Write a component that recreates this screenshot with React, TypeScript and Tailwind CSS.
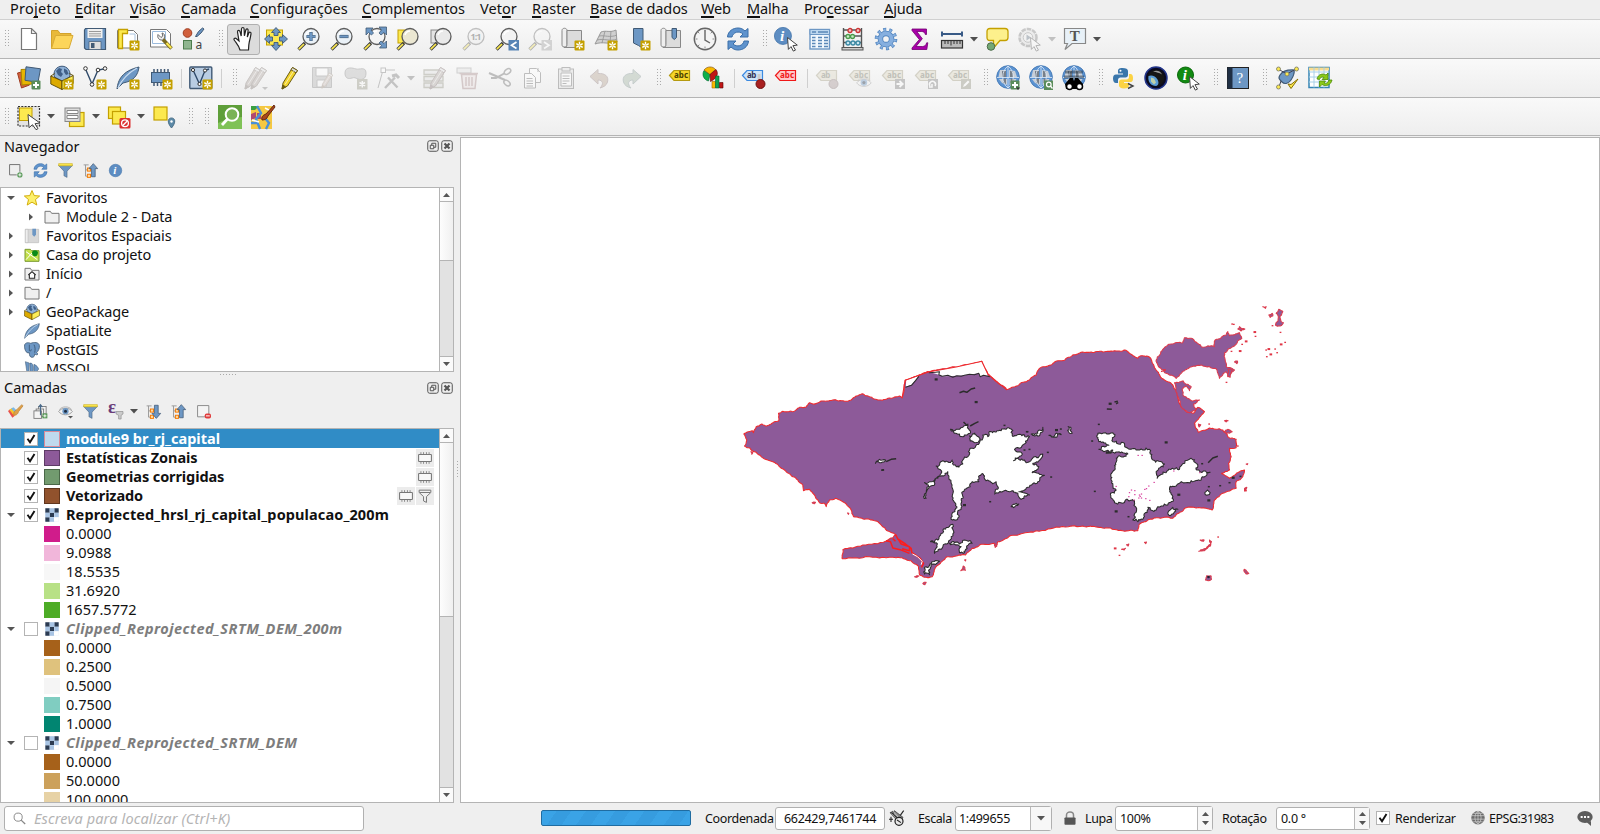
import React from 'react';

/* ---------- icons (24 x 24 grid) ---------- */
const Y = '#fce94f';
const B = '#6d97c4';
const D = '#415a75';

const star = (
  <g>
    <rect x="13.5" y="13.5" width="10" height="10" rx="1" fill="#c4a000" />
    <path d="M18.5 14.8v7.4M15.3 16.6l6.4 3.8M21.7 16.6l-6.4 3.8" stroke="#fff" strokeWidth="1.4" />
    <circle cx="18.5" cy="18.5" r="1.2" fill="#e6d27a" />
  </g>
);
const plus = (
  <g>
    <rect x="14.5" y="14.5" width="9" height="9" rx="1" fill="#5a8c5a" />
    <path d="M19 16v6M16 19h6" stroke="#fff" strokeWidth="2" />
  </g>
);
const lens = (c: string) => (
  <g>
    <path d="M1.5 22.5L8 16" stroke="#3a3a3a" strokeWidth="3.2" />
    <path d="M1.8 22.2L7 17" stroke={Y} strokeWidth="1.7" />
    <circle cx="14" cy="9.5" r="8" fill={c} stroke="#5c5c5c" strokeWidth="1.3" />
    <path d="M9 8a5.5 5.5 0 0 1 5-4" stroke="#fff" strokeWidth="1.4" fill="none" />
  </g>
);
const cursor = <path d="M12.5 10.5l9.8 7.6-4.4.6 2.6 4.4-2.2 1-2.3-4.5-2.6 2.8z" fill="#fff" stroke="#444" strokeWidth="1" />;
const globe = (
  <g>
    <circle cx="12" cy="11" r="11.300" fill="#5b93d2" stroke="#4a7db8" strokeWidth="1" />
    <path d="M4 4h6v7H2.500zM13 4l6 1 2 6h-8zM3 13h8v6l-5-2zM13.500 13h7l-3 5-4 1z" fill="#c8cfd8" />
    <path d="M6 5h4v6H6zM14 5h3v6h-3zM7 12.500h3V18L7 17zM14.500 12.500h3v4.500h-3z" fill="#5d6570" opacity=".75" />
    <path d="M12 0v22M1 11.500h22M12 0c-7 5-7 17 0 22M12 0c7 5 7 17 0 22" stroke="#e3eefa" strokeWidth=".8" fill="none" />
  </g>
);
const tag = (fill: string, stroke: string, text: string, label: string) => (
  <g>
    <path d="M1.500 9.500L6 4.500h15.500v10H6z" fill={fill} stroke={stroke} strokeWidth="1.2" />
    <text x="6" y="12.200" fontSize="8" fontWeight="700" fill={text} fontFamily="Noto Sans, sans-serif" textLength={label.length * 4.7}>{label}</text>
  </g>
);
const box = (
  <g>
    <path d="M4.500 11a8 8 0 1 1 15 0L12 15z" fill="#8fb1d6" stroke="#3a5678" />
    <path d="M6 5l3-3 3 1-1 3 2 2-2 3-3-2-1-2zM14 2.500l3 1.500 1.500 4-2.500 1-2-3z" fill="#3f5f88" />
    <path d="M.8 10l11.200 5v8.500L.8 18z" fill="#dcaa00" stroke="#5a4700" strokeWidth=".9" />
    <path d="M23.200 9.500L12 15v8.500l11.200-6z" fill="#fdee58" stroke="#5a4700" strokeWidth=".9" />
    <path d="M.8 10l4-2.500M23.200 9.500l-4-2" stroke="#5a4700" strokeWidth=".9" />
  </g>
);
const feather = <g><path d="M1 23c1-9 5-18 22-22-1 8-5 14-16 16L1 23z" fill={B} stroke={D} strokeWidth="1" /><path d="M2 22C6 13 12 7 21 2" stroke="#c9dcf0" strokeWidth="1.200" fill="none" /></g>;
const refresh = (
  <g stroke="#3a6ea8" strokeWidth="1" fill="#5f93cd">
    <path d="M1.500 10C2 4 7 1 12 1c3 0 5 1 7 3l3-2.500V10h-8l3-3c-4-3.500-10-2-11 3z" />
    <path d="M22.500 14c-.5 6-5.500 9-10.500 9-3 0-5-1-7-3l-3 2.500V14h8l-3 3c4 3.500 10 2 11-3z" />
  </g>
);
const chip = (c: string, s: string) => <g stroke={s} strokeWidth="1"><path d="M5 3v17M8.500 3v17M12 3v17M15.500 3v17M19 3v17" strokeWidth="1.500" /><rect x="2.500" y="6.500" width="18" height="10" fill={c} /></g>;
const pencil = (c: string, s: string) => <g stroke={s} strokeWidth="1"><path d="M5 17L14.500 1.500l5 3L9.500 20 4 23z" fill={c} /><path d="M14.500 1.500l5 3-1.500 2.300-5-3z" fill="#ddd" /><path d="M7 18.500L15.500 5" stroke="#fff" opacity=".6" /><path d="M4 23l1-4 2.500 2z" fill={s} /></g>;
const filter = <g><path d="M1 4h22l-8.500 9v10l-5-2.500V13z" fill={B} stroke={D} strokeWidth=".8" /><path d="M1 1h22v3.500H1z" fill={Y} stroke="#c4a000" strokeWidth=".8" /></g>;
const tree = (up: boolean) => (
  <g>
    <path d="M1 3h8M4 3v18h6M4 11h5" stroke="#999" strokeWidth="1.500" fill="none" />
    <rect x="7" y="8" width="5" height="5" fill="#ffd9a0" stroke="#f57900" strokeWidth="1.500" />
    <rect x="7" y="18" width="5" height="5" fill="#ffd9a0" stroke="#f57900" strokeWidth="1.500" />
    <path d={up ? 'M16.500 1l7 8h-4v13h-6V9h-4z' : 'M16.500 23l7-8h-4V2h-6v13h-4z'} fill={B} stroke={D} strokeWidth="1.200" />
  </g>
);
const folder = <path d="M1.500 3.500h8l2 3h11v14.500h-21z" fill="#f0f0f0" stroke="#777" strokeWidth="1.500" />;
const scroll = <g><path d="M1 3.500c0-3 5-3 5 0V20H3c-2 0-2-2-2-3z" fill="#eee" stroke="#888" /><path d="M6 3.500h14.500V20.500H3c2 0 3-1 3-3z" fill="#dcdcdc" stroke="#888" /></g>;
const eye = <g><path d="M1 12c5-7 17-7 22 0-5 7-17 7-22 0z" fill="#f2f2f2" stroke="#888" strokeWidth="1.200" /><circle cx="12" cy="11.500" r="5" fill={B} /><circle cx="12" cy="11.500" r="2.400" fill="#1d2c40" /><path d="M2 9C7 3 17 3 22 9" stroke="#999" fill="none" /></g>;
const info = <g><circle cx="10.500" cy="10.500" r="10" fill="#5d8dc2" stroke="#4777ac" /><text x="7" y="16.500" fontFamily="Liberation Serif, serif" fontStyle="italic" fontWeight="700" fontSize="18" fill="#fff">i</text></g>;

const ICONS: Record<string, React.ReactNode> = {
  new: <path d="M4.500 1.500h10l5 5v16h-15zM14.500 1.500v5h5" fill="#fff" stroke="#777" strokeWidth="1.200" />,
  open: <g><path d="M1.500 21.500V3.500H8l2 3h11v4" fill="#e8b93a" stroke="#d3a32c" /><path d="M1.500 21.500l4-13h17.500l-4 13z" fill="#fcd55a" stroke="#d9ab35" /></g>,
  save: <g><path d="M1.500 3l1-1.500h20V22.500H3l-1.500-1.500z" fill={B} stroke={D} strokeWidth="1.200" /><path d="M4.500 2h15v9h-15z" fill="#f0f0f0" /><path d="M6 4.500h12M6 6.800h12M6 9h12" stroke="#999" /><path d="M6 14.500h12v8H6z" fill="#dedede" stroke={D} strokeWidth=".7" /><path d="M8 16h3.500v5H8z" fill={D} /></g>,
  layout: <g><path d="M1.500 3.500h16l4 4v13.500h-20z" fill="#fff" stroke="#777" /><path d="M2.500 2.500h9v4h-5v15h-4z" fill={Y} stroke="#c4a000" strokeWidth="1.300" /><path d="M13.500 7h5.500v8" stroke="#aac4e0" fill="none" />{star}</g>,
  layouts: <g><path d="M1.500 2.500h16l4 4v13.500h-20z" fill="#fff" stroke="#777" /><path d="M3.500 4.500h13v12h-13z" fill="none" stroke="#9bbbdd" /><path d="M9 7.500c-1 3 1 6 4.500 5.500l1.500-1c1.500-3 .5-5.500-2-6l.8 3-1.800 1.500z" fill="#eee" stroke="#666" /><path d="M14 12.500l8.500 9" stroke="#7a6a20" strokeWidth="3.600" /><path d="M17.500 16l4.700 5" stroke={Y} strokeWidth="2" /></g>,
  style: <g><circle cx="5.500" cy="6" r="4.300" fill="#d1603d" stroke="#a03c20" /><path d="M13.500 9.500l3-5 4-3.500 1.500 1-3 4-4 3.500z" fill={B} stroke={D} /><rect x="1.500" y="13.500" width="8" height="8.500" fill="#8fb58f" stroke="#4d7d4d" /><text x="13.500" y="22" fontSize="12" fill="#444" fontFamily="Noto Sans, sans-serif">a</text></g>,
  hand: <path d="M9 23c-1-4-3-6-5.500-9.500-1.500-2 .5-3 2-1.800L8 14 6.500 5c0-2 2-2 2.500-.3L10.200 9l.3-7c.2-2 2.500-2 2.600 0l.3 6.800 1.400-5.800c.5-1.800 2.500-1.400 2.300.5l-.8 6.500 1.500-4c.8-1.500 2.500-.8 2.200.8-.6 4-1.300 6.500-1.800 8.500-.5 2.500-.5 4.500-.7 7.700z" fill="#fff" stroke="#222" strokeWidth="1.200" />,
  pan: <g><rect x="2.500" y="3" width="16" height="15" fill={Y} stroke="#c4a000" /><path d="M12 .5l4.500 5h-2.500v3h-4v-3H7.500zM12 23.500l4.500-5h-2.500v-3h-4v3H7.500zM.5 12l5-4.500V10h3v4h-3v2.500zM23.500 12l-5-4.500V10h-3v4h3v2.500z" fill={B} stroke={D} strokeWidth=".9" /></g>,
  zin: <g>{lens('#eaf1f7')}<path d="M14 5v9M9.500 9.500h9" stroke={D} strokeWidth="3.200" /><path d="M14 5.500v8M10 9.500h8" stroke={B} strokeWidth="2" /></g>,
  zout: <g>{lens('#eaf1f7')}<path d="M9.500 9.500h9" stroke={D} strokeWidth="3.200" /><path d="M10 9.500h8" stroke={B} strokeWidth="2" /></g>,
  zfull: <g>{lens('#f4f4f4')}<path d="M3 1h7L8 3l2.500 3-2 2L5.500 5.500 3 8zM23.500 0v8L21 5.500 18 8l-2-2 2.500-3L16 0zM23.500 21h-7l2-2.500-2.500-2.500 2-2 3 2.500 2.500-2.500z" fill={B} stroke={D} strokeWidth=".8" /></g>,
  zsel: <g><rect x="2" y="3" width="13" height="13" fill={Y} stroke="#c4a000" />{lens('#ebe7d2')}</g>,
  zlayer: <g><rect x="2" y="3" width="13" height="13" fill="#e4e4e4" stroke="#888" />{lens('#e9e9e9')}</g>,
  z11: <g opacity=".35">{lens('#eee')}<text x="8.500" y="13" fontSize="9" fontWeight="700" fill="#333" fontFamily="Noto Sans" textLength="11">1:1</text></g>,
  zlast: <g>{lens('#f3f3f3')}<rect x="13.500" y="13" width="10.500" height="10.500" fill="#5684b5" /><path d="M21.500 15l-5 3.300 5 3.200" stroke="#fff" strokeWidth="1.700" fill="none" /></g>,
  znext: <g opacity=".35">{lens('#f3f3f3')}<rect x="13.500" y="13" width="10.500" height="10.500" fill="#999" /><path d="M16 15l5 3.300-5 3.200" stroke="#fff" strokeWidth="1.700" fill="none" /></g>,
  newmap: <g>{scroll}{star}</g>,
  map3d: <g><path d="M1 17c2-4 4-8 6-12 5-2 9 1 15-2l1 12c-8 3-14-1-22 2z" fill="#d0d0d0" stroke="#999" /><path d="M5 9c6-1 11 2 18-1M3 13c7-2 13 2 20-1M11 4L8 16M17 4l-1 12" stroke="#999" strokeWidth=".9" fill="none" />{star}</g>,
  bookmark: <g><path d="M6.500 1.500h9.500v20l-4.500-3-5-2.500z" fill={B} stroke={D} />{star}</g>,
  bookmarks: <g>{scroll}<path d="M12 1.500h4.500v9l-2.200 2-2.300-2z" fill={B} stroke={D} /></g>,
  clock: <g><circle cx="12" cy="12" r="10.700" fill="#f4f4f4" stroke="#666" strokeWidth="1.400" /><path d="M12 3v10l5 3" stroke="#666" strokeWidth="1.400" fill="none" /><path d="M12 2.500v2M12 19.500v2M2.500 12h2M19.500 12h2M5 5l1.300 1.300M19 5l-1.300 1.300M5 19l1.300-1.300" stroke="#888" /></g>,
  refresh,
  identify: <g><g transform="translate(-1 0) scale(.85)">{info}</g>{cursor}</g>,
  table: <g><rect x="2" y="2.500" width="19.500" height="19.500" fill="#f1f7fd" stroke={B} strokeWidth="1.400" /><path d="M2 2.500h19.500v5H2z" fill="#bcd6ee" stroke={B} /><path d="M4 5h4M10 5h10M4 10.500h3.500M4 13.500h3.500M4 16.500h3.500M4 19.500h3.500M10 10.500h4M10 13.500h4M10 16.500h4M10 19.500h4M16 10.500h4M16 13.500h4M16 16.500h4M16 19.500h4" stroke="#5a88b8" strokeWidth="1.300" /></g>,
  abacus: <g><path d="M2.500 1v20M20.500 1v20M2.500 3h18M2.500 9h18M2.500 15.500h18" stroke="#555" strokeWidth="1.400" /><rect x="1" y="20.500" width="21" height="2.500" fill="#ccc" stroke="#555" /><g strokeWidth="1.300"><circle cx="9" cy="3.500" r="2" fill="#f4c4c4" stroke="#c33" /><circle cx="17" cy="3.500" r="2" fill="#f4c4c4" stroke="#c33" /><circle cx="7" cy="9.500" r="2" fill="#c8ecc8" stroke="#4b9b4b" /><circle cx="11.500" cy="9.500" r="2" fill="#c8ecc8" stroke="#4b9b4b" /><circle cx="7" cy="16" r="2" fill="#c9e4ee" stroke="#3b8aa5" /><circle cx="12" cy="16" r="2" fill="#c9e4ee" stroke="#3b8aa5" /><circle cx="17" cy="16" r="2" fill="#c9e4ee" stroke="#3b8aa5" /></g></g>,
  gear: <g><circle cx="12" cy="12" r="9" fill="none" stroke="#5587c0" strokeWidth="4.600" strokeDasharray="2.800 2.850" /><circle cx="12" cy="12" r="5.600" fill="none" stroke="#5587c0" strokeWidth="5.500" /><circle cx="12" cy="12" r="5.600" fill="none" stroke="#86afdf" strokeWidth="3.800" /><circle cx="12" cy="12" r="9" fill="none" stroke="#86afdf" strokeWidth="3.200" strokeDasharray="1.600 4.050" strokeDashoffset="-.6" /></g>,
  sigma: <path d="M5 2h14.500v5.500h-1.200c-.5-2.300-1.600-3-4.100-3H9.800l5.500 7.200L9 19.500h6.500c2.300 0 3.500-1.300 4.200-3.700h1.100l-1 6.700H5v-1.500l7.300-8.500L5 3.500z" fill="#a800a8" stroke="#720072" strokeWidth=".8" />,
  ruler: <g><path d="M2 7h20M2 4.500v5M22 4.500v5" stroke="#385a86" strokeWidth="2" /><rect x="1.500" y="13.500" width="21" height="7.500" fill="#bbb" stroke="#333" strokeWidth="1.200" /><path d="M5 14v3M8 14v3M11 14v4.500M14 14v3M17 14v3M20 14v3" stroke="#333" /></g>,
  bubble: <g><path d="M2 4.500q0-3 3-3h15q3 0 3 3v6q0 3-3 3h-5L8.500 21v-7.500H5q-3 0-3-3z" fill="#fdf08c" stroke="#c4a000" strokeWidth="1.300" /><circle cx="6" cy="19.500" r="3.800" fill="#74a874" stroke="#4b6b4b" /></g>,
  action: <g opacity=".35"><circle cx="10" cy="10.500" r="8.500" fill="#ddd" stroke="#777" strokeWidth="2.500" strokeDasharray="4.500 1" /><circle cx="10" cy="10.500" r="4.800" fill="#eee" stroke="#777" /><path d="M8.500 7.500l4.500 3-4.500 3z" fill="#567" />{cursor}</g>,
  text: <g><path d="M1.500 1.500h21v15H9L2 22.500l2.500-6h-3z" fill="#e8f1f8" stroke="#888" strokeWidth="1.200" /><text x="6.800" y="14" fontFamily="Liberation Serif, serif" fontSize="15" fontWeight="700" fill="#555">T</text></g>,
  source: <g><path d="M.5 7l8-2 4 14-8 3z" fill="#d1603d" stroke="#a03c20" /><path d="M4 3.500l10-.5 1 15-10 1z" fill="#e8b500" stroke="#a88400" /><path d="M9 .8l14.500 2-2.500 13.500-13-2z" fill={B} stroke={D} />{plus}</g>,
  gpkg: <g>{box}{star}</g>,
  gpkg0: box,
  shp: <g><path d="M2.500 3l6.500 15L15 4l8-1.500" fill="none" stroke="#2f4a6a" strokeWidth="1.400" /><g fill="#fff" stroke="#333"><circle cx="2.500" cy="2.500" r="1.800" /><circle cx="9" cy="18.500" r="1.800" /><circle cx="15" cy="4" r="1.800" /><circle cx="22" cy="2.500" r="1.800" /></g>{star}</g>,
  featherN: <g>{feather}{star}</g>,
  feather,
  chipN: <g>{chip(B, D)}{star}</g>,
  virtual: <g><rect x=".8" y="1" width="22" height="21.500" rx="1" fill="#b9cde3" stroke={D} strokeWidth="1.400" /><path d="M4 4l6.500 14L16 4.500l4-1.500" fill="none" stroke="#2f4a6a" strokeWidth="1.400" /><g fill="#fff" stroke="#333"><circle cx="4" cy="4" r="1.600" /><circle cx="10.500" cy="18" r="1.600" /><circle cx="16" cy="4.500" r="1.600" /></g>{star}</g>,
  pencils: <g opacity=".35"><g transform="translate(-4 0)">{pencil('#a69a94', '#7a706a')}</g><g transform="translate(2 0)">{pencil('#a69a94', '#7a706a')}</g><path d="M17 21h6l-3 3z" fill="#777" /></g>,
  pencil: pencil('#f2d42c', '#6b5c14'),
  saveE: <g opacity=".33"><path d="M1.500 1.500h19v20h-19z" fill="#aaa" stroke="#777" /><path d="M5 2h12v8H5zM6 14h9v7H6z" fill="#fff" stroke="#777" /><g transform="translate(8 6) scale(.7)">{pencil('#b9a8a0', '#876')}</g></g>,
  blob: <g opacity=".4"><path d="M1 7c0-7 8-5 11-4s10-3 10 4-5 7-8 6-3-2-6-1-7 1-7-5z" fill="#bbb" stroke="#888" /><rect x="13" y="13" width="10.500" height="10.500" fill="#998" /><path d="M18.300 15v6.500M15.500 16.500l5.600 3.400M21 16.500l-5.600 3.400" stroke="#fff" strokeWidth="1.500" /></g>,
  vertex: <g opacity=".33" stroke="#666" fill="none"><path d="M6 4L1 22M6 4h12" /><rect x="4" y="2" width="4.500" height="4.500" fill="#fff" /><path d="M8 22L18 11.500M11 11.500l9.500 10" strokeWidth="2.400" /><path d="M15 10l4-1 3 3" strokeWidth="3" /></g>,
  multi: <g opacity=".35"><path d="M2 4h19v4.500H2zM2 10.500h19V15H2zM2 17h19v4.500H2z" fill="#ddd" stroke="#887" strokeWidth="1.300" /><g transform="translate(4 0)">{pencil('#a9a09a', '#766')}</g></g>,
  trash: <g opacity=".33"><rect x="2" y="2" width="14" height="5" fill="#ddd" stroke="#888" /><path d="M6.500 8.500h15l-1.500 14H8z" fill="#e8dcdc" stroke="#977" strokeWidth="1.500" /><path d="M11 11v9M14 11v9M17 11v9M4.500 7.500h18.500" stroke="#977" strokeWidth="1.500" /></g>,
  cut: <g opacity=".38" fill="none" stroke="#666"><path d="M1 7l16 7M3 12h5l9-5" strokeWidth="2" /><ellipse cx="19.500" cy="5.500" rx="3.600" ry="2.300" strokeWidth="1.500" transform="rotate(-35 19.500 5.500)" /><ellipse cx="19" cy="17" rx="3.600" ry="2.300" strokeWidth="1.500" transform="rotate(40 19 17)" /></g>,
  copy: <g opacity=".38" fill="#fff" stroke="#666"><path d="M8.500 2.500h7l4 4v10h-11z" /><path d="M3.500 7.500h7l4 4v10.500h-11z" /><path d="M5.500 12.500h6M5.500 15h6.500M5.500 17.500h6.500M5.500 20h6.500M17 2v4" /></g>,
  paste: <g opacity=".38" fill="#ddd" stroke="#666"><rect x="4.500" y="3" width="15" height="19.500" /><path d="M7 7h10.500v13H7z" fill="#fff" /><rect x="8" y="1.500" width="8" height="3.500" /><path d="M8.500 10h7M8.500 12.500h7M8.500 15h7M8.500 17.500h4" /></g>,
  undo: <path opacity=".42" d="M3 10.500L11 3.500v4c7-.5 11 3 9.500 8.500-1 3.500-4 5-7.500 6 4-4 3-8-2-8v4z" fill="#bba998" stroke="#988" />,
  redo: <path opacity=".42" d="M21 10.500L13 3.500v4c-7-.5-11 3-9.500 8.500 1 3.500 4 5 7.500 6-4-4-3-8 2-8v4z" fill="#a8b8a8" stroke="#899" />,
  label: <g transform="translate(-1 0)">{tag('#f5d629', '#b59a10', '#4a4000', 'abc')}</g>,
  diagram: <g><path d="M8 8.500L2 4.500A7 7 0 0 0 6.500 15z" fill="#10b04a" stroke="#063" strokeWidth=".6" /><path d="M8 8.500L2 4c3-4 9-4 11.500-.5z" fill="#f8b800" stroke="#740" strokeWidth=".6" /><path d="M8 8.500l6-5c3 4 1 9-5.500 12z" fill="#c01616" stroke="#500" strokeWidth=".6" /><path d="M10 15.500h3.500V22H10z" fill="#f8b800" stroke="#a60" strokeWidth=".6" /><path d="M13.500 10H17v12h-3.500z" fill="#10a050" stroke="#063" strokeWidth=".6" /><path d="M17.500 16.500H21V22h-3.500z" fill="#c01616" stroke="#500" strokeWidth=".6" /></g>,
  pin: <g transform="translate(-1 0)">{tag('#cfe4f8', '#3c8ae0', '#335', 'ab')}<path d="M18 8v8" stroke="#ccc" strokeWidth="3" /><circle cx="19.500" cy="18" r="4.500" fill="#a82020" stroke="#701010" /></g>,
  labelR: <g transform="translate(-1 0)">{tag('#ffc8c8', '#f01818', '#f01818', 'abc')}</g>,
  g1: <g opacity=".4">{tag('#ddd8c4', '#a8a288', '#776', 'ab')}<circle cx="18.500" cy="18" r="4.500" fill="#a99" stroke="#877" /></g>,
  g2: <g opacity=".4">{tag('#ddd8c4', '#a8a288', '#776', 'abc')}<g transform="translate(8 9) scale(.66)">{eye}</g></g>,
  g3: <g opacity=".42">{tag('#ddd8c4', '#a8a288', '#776', 'abc')}<rect x="14" y="13" width="10" height="10" fill="#888" /><path d="M15.500 18h5M18.500 15l3.200 3-3.200 3" stroke="#fff" strokeWidth="1.800" fill="none" /></g>,
  g4: <g opacity=".42">{tag('#ddd8c4', '#a8a288', '#776', 'abc')}<rect x="14" y="13" width="10" height="10" fill="#888" /><path d="M21 20a3 3 0 1 0-5 0M15 21h3v-3" stroke="#fff" strokeWidth="1.500" fill="none" /></g>,
  g5: <g opacity=".42">{tag('#ddd8c4', '#a8a288', '#776', 'abc')}<rect x="14" y="13" width="10" height="10" fill="#998" /><path d="M16 21l1-2.500 4-4 1.500 1.500-4 4z" fill="#fff" /></g>,
  globeP: <g>{globe}{plus}<path d="M20 21.500h4l-2 2.500z" fill="#333" /></g>,
  globeS: <g>{globe}<rect x="15" y="14.500" width="9" height="9.500" fill="#5a8c5a" /><circle cx="19.800" cy="18.500" r="2.300" fill="none" stroke="#fff" strokeWidth="1.200" /><path d="M21.500 20l2 2.500" stroke="#fff" strokeWidth="1.300" /></g>,
  globeB: <g>{globe}<path d="M3 6h18M2 11h20" stroke="#234" strokeWidth="3" opacity=".5" /><path d="M8 12h3l1 3 1-3h3l5 6-1 5H4l-1-5z" fill="#000" /><circle cx="7.500" cy="20.500" r="3" fill="#fff" stroke="#000" strokeWidth="1.500" /><circle cx="17.500" cy="20.500" r="3" fill="#fff" stroke="#000" strokeWidth="1.500" /></g>,
  python: <g><path d="M11.500 2c-4 0-4.500 1.500-4.500 3v2.500h5v1H5C3 8.500 2 10 2 12.500S3 17 5 17h2v-3c0-1.500 1-2.500 2.500-2.500h5c1.500 0 2.500-1 2.500-2.500V5c0-2-2-3-5.500-3z" fill="#3a76ab" /><circle cx="9.500" cy="4.700" r="1" fill="#fff" /><path d="M18 8v3c0 1.500-1 2.500-2.500 2.500h-5C9 13.500 8 14.500 8 16v3.500c0 1.500 1.500 3 5 3s5-1 5-3V17h-5v-1h6.500c2 0 2.500-1.500 2.500-4s-1-4-2.500-4z" fill="#fcd344" /><path d="M17 17.500l5 2.500-5 2.500" stroke="#444" strokeWidth="1.400" fill="none" /></g>,
  earth: <g><circle cx="12" cy="12" r="11" fill="#0a0a20" stroke="#22348a" strokeWidth="1.500" /><circle cx="12" cy="12" r="8.300" fill="#161616" /><path d="M4.500 10c3-1.500 7 0 9 3.500s.5 6-1.500 6.500C7 20 3.500 16 4.500 10z" fill="#5a9cd8" /><path d="M7 11.500l3 1 2 4-2 2-3-3z" fill="#c0d0a8" /><path d="M9 5.500c4-2 8 0 9 3-3-2-5-2-9-3z" fill="#999" /></g>,
  infoG: <g><circle cx="8.500" cy="9" r="8" fill="#128a12" stroke="#0a6a0a" /><text x="5.800" y="14" fontFamily="Liberation Serif, serif" fontStyle="italic" fontWeight="700" fontSize="15" fill="#fff">i</text>{cursor}</g>,
  help: <g><rect x="1.500" y="1.500" width="21" height="21" fill={B} stroke="#222" /><rect x="1.500" y="1.500" width="5" height="21" fill="#1f2f44" /><text x="10.500" y="17" fontFamily="Liberation Serif, serif" fontSize="15" fill="#fff">?</text></g>,
  topo: <g><path d="M5 9c4-6 11-5 14-5 1 4-1 7-3 10s-6 5-9 2-4-4-2-7z" fill={B} stroke={D} strokeWidth="1.200" /><path d="M3 3l9 5 9-5M4 21l2-6" stroke="#445" fill="none" /><g fill={Y} stroke="#776" strokeWidth=".8"><circle cx="3.500" cy="3" r="2" /><circle cx="21.500" cy="3" r="2" /><circle cx="12" cy="8" r="2" /><circle cx="3.500" cy="21" r="2" /></g><path d="M13 18l3 4.500L23 13l-7 5.500z" fill={Y} stroke="#887000" /></g>,
  tableG: <g><rect x="1" y="1.500" width="20" height="20" fill="#fff" stroke="#3584b4" strokeWidth="1.500" /><path d="M1 1.500h20v3H1z" fill="#f8dc90" /><path d="M6 1.500v20M11 1.500v20M16 1.500v20M1 6h20M1 11h20M1 16h20" stroke="#a8d0e8" /><path d="M9 13c1-5 6-6 9-4l2-2v6.500h-6l2-2c-2-1-4 0-4.500 2zM24 14c-1 5-6 7-10 4.500L11.500 21v-6h6l-1.500 2c2 1 4 0 5-3z" fill="#8ac818" stroke="#4c8a08" strokeWidth=".8" /></g>,
  select: <g><rect x="1" y="1.500" width="21.500" height="19.500" fill="#e4e4e4" stroke="#333" strokeDasharray="2 1.300" strokeWidth="1.200" /><rect x="2.500" y="3" width="12.500" height="12.500" fill={Y} stroke="#c4a000" /><path d="M11 9.500l12 8.500-5 .7 3 5-2 1-3.500-5-3.500 3z" fill="#fff" stroke="#444" /></g>,
  form: <g><rect x="7.500" y="7.500" width="14.500" height="14" fill={Y} stroke="#c4a000" strokeWidth="1.200" /><rect x="3" y="3" width="15" height="13.500" fill="#ddd" stroke="#888" /><path d="M5 5.500h11v3H5zM5 10.500h11v3H5z" fill="#fff" stroke="#888" /></g>,
  desel: <g><rect x="1.500" y="2" width="12" height="11.500" fill={Y} stroke="#c4a000" strokeWidth="1.200" /><rect x="5.500" y="6.500" width="13" height="12.500" fill={Y} stroke="#c4a000" strokeWidth="1.200" /><rect x="12.500" y="13" width="11" height="10.500" rx="1.500" fill="#dc3030" /><circle cx="18" cy="18.200" r="3.400" fill="none" stroke="#fff" strokeWidth="1.300" /><path d="M15.800 20.500l4.500-4.500" stroke="#fff" strokeWidth="1.300" /></g>,
  selloc: <g><rect x="2" y="2" width="13" height="13" fill={Y} stroke="#c4a000" strokeWidth="1.200" /><path d="M19.500 23c-5-6-3.500-10 0-10s5 4 0 10z" fill="#5d8aa8" stroke="#4a6f88" /><circle cx="19.500" cy="16.500" r="1.200" fill="#fff" /></g>,
  green: <g transform="translate(1 0)"><rect width="24" height="24" fill="#7fc257" /><path d="M0 0h24v12c-10 1-16 2-24 6z" fill="#5f9f3a" /><circle cx="14" cy="9.500" r="6.300" fill="#7ab355" stroke="#fff" strokeWidth="2" /><path d="M9.500 14L4 20" stroke="#fff" strokeWidth="2.800" /></g>,
  osm: <g transform="translate(1 0)"><rect y="1" width="21" height="23" fill="#f5c842" /><path d="M0 1h8l-4 4H0z" fill="#3aa040" /><path d="M0 9l5-2v6l-5 2zM6 8h4v6H6z" fill="#b04870" /><path d="M6 1l4 7-5 6 4 10M14 13l4 5-3 6M0 18h6" stroke="#4a90d8" strokeWidth="2.400" fill="none" /><path d="M14 3l6 3M1 15l7 2" stroke="#fff" strokeWidth="1.500" /><path d="M11 15c-1-3 1-5 4-6l8-9 1 2-7 9c-1 3-3 4-6 4z" fill="#a8461c" stroke="#5c2008" strokeWidth=".9" /></g>,
  addlayer: <g><path d="M19 14V2.500H2.500V19H14" fill="none" stroke="#777" strokeWidth="1.600" /><circle cx="19" cy="19" r="4.200" fill="#5a9a5a" /><path d="M19 16.500v5M16.500 19h5" stroke="#fff" strokeWidth="1.500" /></g>,
  filter,
  collapse: tree(true),
  expand: tree(false),
  info: <g transform="translate(1.500 1.500)">{info}</g>,
  brush: <g><path d="M0 11l4-3 8 10-5 4z" fill="#e8504c" /><path d="M2 9l5-3 7 9-4 4z" fill="#f6c52c" /><path d="M5 7l4-2 6 7-2 4z" fill="#7ab8e8" /><path d="M9 17c0-4 2-7 5-8l8-8 2 2-7 9c-1 4-4 7-8 5z" fill="#dda04a" stroke="#b87a28" /></g>,
  group: <g fill="#f4f4f4" stroke="#777" strokeWidth="1.400"><rect x="9" y="4" width="12" height="12" /><rect x="5" y="8" width="12" height="12" /><rect x="1.500" y="11" width="12" height="12" /><path d="M12 18V2M9 5l3-4 3 4" stroke="#4a6a8a" strokeWidth="1.800" fill="none" /><rect x="15" y="15" width="8" height="8" fill="#5a9a5a" stroke="none" /><path d="M19 16.500v5M16.500 19h5" stroke="#fff" strokeWidth="1.500" /></g>,
  eye: <g>{eye}<path d="M16 19h8l-4 4z" fill="#555" /></g>,
  eps: <g><text x="0" y="15" fontFamily="Liberation Serif, serif" fontSize="30" fontWeight="700" fill="#6a3d7a">ε</text><path d="M13 12h11v4l-3 2v6h-4v-6l-4-2z" fill="#ccc" stroke="#888" /></g>,
  remove: <g><path d="M2.500 2.500h18v18h-18z" fill="#f4f4f4" stroke="#888" strokeWidth="1.500" /><rect x="14" y="15" width="10" height="8" rx="3" fill="#e03c3c" /><path d="M16 19h6" stroke="#fff" strokeWidth="1.600" /></g>,
  star: <path d="M12 .8l3.300 7.600 8.200.6-6.300 5.400 2 8.200-7.200-4.400-7.200 4.400 2-8.200L.5 9l8.200-.6z" fill="#fdf06a" stroke="#d0a800" strokeWidth="1.400" />,
  folder,
  book: <g><path d="M2 2h20v20H2z" fill="#d8d8d8" stroke="#bbb" /><path d="M2 2h4v20H2z" fill="#eee" stroke="#aaa" strokeWidth=".6" /><path d="M12.500 1h5.500v9l-2.700 3-2.800-3z" fill={B} /></g>,
  proj: <g><path d="M1.500 3.500h8l2 2h11v16h-21z" fill="#c4e04c" stroke="#7a9a30" strokeWidth="1.500" /><path d="M3 7l17 12M3 19L12 9" stroke="#fff" strokeWidth="1.500" /><path d="M12 8c1-4 8-4 9 0 0 4-2 6-4.500 6S12 12 12 8z" fill="#0a8a1a" /></g>,
  home: <g>{folder}<path d="M6.500 13.500L12 8.500l5.500 5M8 13v5.500h8V13" stroke="#222" strokeWidth="1.600" fill="#fff" /></g>,
  pg: <g><path d="M1 4c2-4 7-3 9-2 5-2 12-2 13 3 1 4-2 9-4 11 0 1 2 1 2 2-1 2-4 1-5 0 0 3-1 5-4 5s-4-3-4-7c-5 2-8-6-7-12z" fill={B} stroke={D} strokeWidth="1.200" /><path d="M8 4v9c2 1 3 0 3-2M15 4c2 4 2 8 1 12" stroke="#35506e" strokeWidth="1.200" fill="none" /></g>,
  ms: <g><path d="M2 1l6 2-1 19-2-1z" fill={B} stroke={D} strokeWidth=".8" /><path d="M9 3c4 0 5 3 5 8s-1 8-5 10zM15 5c5 2 6 5 7 7-1 2-3 4-7 6z" fill={B} stroke={D} strokeWidth=".8" /></g>,
  raster: <g><rect x="2" y="2" width="20" height="20" fill="#dde8f4" /><path d="M2 2h6.500v6.500H2zM15.500 2H22v6.500h-6.500zM8.500 8.500h6.500V15H8.500zM2 15.500h6.500V22H2z" fill="#2b3b52" /><path d="M8.500 2h7v6.500h-7zM2 8.500h6.500v7H2zM15.500 8.500H22V15h-6.500zM8.500 15.500h7V22h-7z" fill="#a8c4e4" /><path d="M15 15.500h7V22h-7z" fill="#fff" /></g>,
  chipG: <g stroke="#888" strokeWidth="1.600"><path d="M5 2v20M9.500 2v20M14.500 2v20M19 2v20" /><rect x="1" y="6" width="22" height="12" rx="1" fill="#f8f8f8" stroke="#777" strokeWidth="1.800" /></g>,
  filterG: <path d="M2 2h20v4l-7.500 7v10l-5-2.500V13L2 6zM3 6h18" fill="#f0f0f0" stroke="#777" strokeWidth="1.700" />,
  float: <g fill="none" stroke="#555"><rect x="1.500" y="1.500" width="21" height="21" rx="4" strokeWidth="2" /><path d="M9.500 6.500h8v8h-8z" strokeWidth="2" /><path d="M6.500 10.500h7v7h-7z" fill="#eee" strokeWidth="2" /></g>,
  close: <g fill="none" stroke="#555"><rect x="1.500" y="1.500" width="21" height="21" rx="4" strokeWidth="2" /><path d="M7 7l10 10M17 7L7 17" strokeWidth="4.500" /></g>,
  search: <g fill="none" stroke="#888" strokeWidth="1.800"><circle cx="9.500" cy="9.500" r="7.500" /><path d="M15 15l7.500 7" strokeWidth="2.500" /></g>,
  lock: <g><path d="M6 12V7c0-7 12-7 12 0v5" fill="none" stroke="#888" strokeWidth="2.600" /><rect x="2.500" y="11" width="19" height="12.500" rx="1.500" fill="#555" /></g>,
  mouse: <g><path d="M1 4l4-3 9 9-3 5z" fill="#333" /><path d="M8 1l13 10-3 5L6 6z" fill="#888" stroke="#222" /><path d="M3 5l9 9M6 2l10 11M2 1l3 3M23 0l-6 6" stroke="#ddd" strokeWidth="1.200" /><circle cx="15" cy="17" r="6" fill="#e8e8e8" stroke="#222" strokeWidth="1.800" /><path d="M12 15l6 4M22 1l-5 7M0 14h6M3 10v8" stroke="#222" strokeWidth="1.600" /></g>,
  crs: <g fill="none" stroke="#e4e4e4" strokeWidth="1"><circle cx="12" cy="11.500" r="11" fill="#6c6c6c" stroke="#6c6c6c" /><path d="M12 0v23M1 8h22M1 14h22M12 0.500C5 5 5 18 12 22.500M12 .5c7 4.500 7 17.500 0 22M4 18.500h16M4 4h16" /></g>,
  msg: <g><ellipse cx="12" cy="10.500" rx="11.500" ry="9" fill="#5c5c5c" /><path d="M13 17h8v7z" fill="#5c5c5c" /><path d="M5.500 10.500h3M10.500 10.500h3M15.500 10.500h3" stroke="#fff" strokeWidth="2.800" /></g>,
};

const Icon = ({ n, c = 'size-6' }: { n: string; c?: string }) => (
  <svg viewBox="0 0 24 24" className={`${c} shrink-0 overflow-visible`}>{ICONS[n]}</svg>
);

/* ---------- toolbar parts ---------- */
const Dots = ({ rows, cols, c }: { rows: number; cols: number; c?: string }) => (
  <svg width={cols * 3} height={rows * 3} className={c}>
    {Array.from({ length: rows * cols }, (_, i) => (
      <rect key={i} x={(i % cols) * 3} y={Math.floor(i / cols) * 3} width="1" height="1" fill="#aaa" />
    ))}
  </svg>
);
const Grip = ({ first }: { first?: boolean }) => (
  <div className={first ? 'flex w-[12.5px] shrink-0 pl-[5px]' : 'flex w-4 shrink-0 pl-[8.5px]'}><Dots rows={6} cols={2} /></div>
);
const Sep = () => <div className="flex w-[7px] shrink-0 justify-center"><div className="h-[19px] w-px bg-[#cfcfcf]" /></div>;
const Arrow = ({ dim }: { dim?: boolean }) => (
  <div className="flex w-3 shrink-0 justify-center pr-px">
    <svg width="8" height="5" className={dim ? 'opacity-30' : ''}><path d="M0 0h8L4 4.500z" fill="#4f4f4f" /></svg>
  </div>
);

const ROWS = [
  '|0 new open save layout layouts style | hand! pan zin zout zfull zsel zlayer z11 zlast znext newmap map3d bookmark bookmarks clock refresh | identify table abacus gear sigma ruler v bubble action w text v',
  '|0 source gpkg shp featherN chipN / virtual / | pencils pencil saveE blob vertex w multi trash cut copy paste undo redo | label diagram / pin labelR / g1 g2 g3 g4 g5 | globeP globeS globeB | python earth infoG | help | topo tableG',
  '|0 select v form v desel v selloc | | green osm',
];
const Toolbar = ({ items, c }: { items: string; c: string }) => (
  <div className={`flex shrink-0 items-center border-b border-[#b4b4b4] bg-linear-to-b from-[#f9f9f9] to-[#eeeeee] ${c}`}>
    {items.split(' ').map((t, i) => {
      if (t === '|0') return <Grip key={i} first />;
      if (t === '|') return <Grip key={i} />;
      if (t === '/') return <Sep key={i} />;
      if (t === 'v') return <Arrow key={i} />;
      if (t === 'w') return <Arrow key={i} dim />;
      if (t.endsWith('!'))
        return <div key={i} className="flex h-[31px] w-[33px] shrink-0 items-center justify-center rounded-[3px] border border-[#b0b0b0] bg-[#dcdcdc]"><Icon n={t.slice(0, -1)} /></div>;
      return <div key={i} className="flex w-[33px] shrink-0 justify-center"><Icon n={t} /></div>;
    })}
  </div>
);

/* menu titles: text before, accelerator, text after, width */
const MENU: [string, string, string, string][] = [
  ['Pro', 'j', 'eto', 'w-[50px] tracking-[0.25px]'], ['', 'E', 'ditar', 'w-[40px] tracking-[0.1px]'], ['', 'V', 'isão', 'w-[36px]'], ['', 'C', 'amada', 'w-[54px]'],
  ['', 'C', 'onfigurações', 'w-[97px] tracking-[-0.05px]'], ['', 'C', 'omplementos', 'w-[103px] tracking-[-0.1px]'], ['Vet', 'o', 'r', 'w-[37px] tracking-[0.05px]'], ['', 'R', 'aster', 'w-[43px] tracking-[0.05px]'],
  ['', 'B', 'ase de dados', 'w-[96px] tracking-[-0.1px]'], ['', 'W', 'eb', 'w-[31px]'], ['', 'M', 'alha', 'w-[42px]'], ['Pro', 'c', 'essar', 'w-[65px]'], ['', 'A', 'juda', 'w-[40px]'],
];

/* ---------- side panels ---------- */
const Scroll = ({ thumb }: { thumb: string }) => (
  <div className="flex w-[14px] shrink-0 flex-col border-l border-[#b4b4b4] bg-[#e2e2e2]">
    <div className="flex h-[14px] shrink-0 items-center justify-center border-b border-[#b4b4b4] bg-[#fafafa]"><svg width="7" height="4"><path d="M0 4h7L3.500 0z" fill="#555" /></svg></div>
    <div className={`border-b border-[#b4b4b4] bg-linear-to-r from-[#fdfdfd] to-[#f0f0f0] ${thumb}`} />
    <div className="grow" />
    <div className="flex h-[15px] items-center justify-center border-t border-[#b4b4b4] bg-[#fafafa] pb-px"><svg width="7" height="4"><path d="M0 0h7L3.500 4z" fill="#555" /></svg></div>
  </div>
);
const Title = ({ t, c }: { t: string; c: string }) => (
  <div className={`flex shrink-0 items-center pr-[1.5px] pl-1 ${c}`}>
    <span className="grow">{t}</span>
    <Icon n="float" c="size-3 mr-[2px]" />
    <Icon n="close" c="size-3" />
  </div>
);
const Expander = ({ open }: { open?: boolean }) => (
  <svg width="8" height="8" className="shrink-0"><path d={open ? 'M0 2h8L4 6z' : 'M2 .5v7l4-3.500z'} fill="#555" /></svg>
);

const BROWSER: [number, string, string, number][] = [
  [1, 'star', 'Favoritos', 0], [2, 'folder', 'Module 2 - Data', 1], [2, 'book', 'Favoritos Espaciais', 0], [2, 'proj', 'Casa do projeto', 0],
  [2, 'home', 'Início', 0], [2, 'folder', '/', 0], [2, 'gpkg0', 'GeoPackage', 0], [0, 'feather', 'SpatiaLite', 0], [0, 'pg', 'PostGIS', 0], [0, 'ms', 'MSSQL', 0],
];

const Check = ({ on }: { on: boolean }) => (
  <div className="flex size-[14px] shrink-0 items-center justify-center border border-[#b4b4b4] bg-white">
    {on && <svg width="10" height="10" viewBox="0 0 10 10"><path d="M1.500 4.800L4 8.200 8.500 1" fill="none" stroke="#111" strokeWidth="1.900" /></svg>}
  </div>
);

type Layer = { t: string; c?: string; on?: boolean; sel?: boolean; raster?: boolean; badges?: string[]; v?: boolean };
const LAYERS: Layer[] = [
  { t: 'module9 br_rj_capital', c: 'bg-[#bfdaee] border border-[#d98b98]', on: true, sel: true },
  { t: 'Estatísticas Zonais', c: 'bg-[#8d5a99] border border-[#5e3b66]', on: true, badges: ['chipG'] },
  { t: 'Geometrias corrigidas', c: 'bg-[#729b6f] border border-[#4a6748]', on: true, badges: ['chipG'] },
  { t: 'Vetorizado', c: 'bg-[#91522d] border border-[#60361e]', on: true, badges: ['chipG', 'filterG'] },
  { t: 'Reprojected_hrsl_rj_capital_populacao_200m', on: true, raster: true },
  { t: '0.0000', c: 'bg-[#d01c8b]', v: true }, { t: '9.0988', c: 'bg-[#f1b6da]', v: true }, { t: '18.5535', c: 'bg-[#f7f7f7]', v: true },
  { t: '31.6920', c: 'bg-[#b8e186]', v: true }, { t: '1657.5772', c: 'bg-[#4dac26]', v: true },
  { t: 'Clipped_Reprojected_SRTM_DEM_200m', on: false, raster: true },
  { t: '0.0000', c: 'bg-[#a6611a]', v: true }, { t: '0.2500', c: 'bg-[#dfc27d]', v: true }, { t: '0.5000', c: 'bg-[#f5f5f5]', v: true },
  { t: '0.7500', c: 'bg-[#80cdc1]', v: true }, { t: '1.0000', c: 'bg-[#018571]', v: true },
  { t: 'Clipped_Reprojected_SRTM_DEM', on: false, raster: true },
  { t: '0.0000', c: 'bg-[#a6611a]', v: true }, { t: '50.0000', c: 'bg-[#cca15b]', v: true }, { t: '100.0000', c: 'bg-[#e7d2a5]', v: true },
];
const textStyle = (l: Layer) => {
  if (l.v) return 'tracking-[0.05px]';
  if (!l.on) return 'font-bold text-[#7d7d7d] italic tracking-[0.46px]';
  if (l.raster) return 'font-bold tracking-[0.11px]';
  return l.sel ? 'font-bold tracking-[-0.01px] underline underline-offset-[3px] [text-decoration-skip-ink:none]' : 'font-bold tracking-[-0.1px]';
};
const LayerRow = ({ l }: { l: Layer }) => (
  <div className={`flex h-[19px] shrink-0 items-center pr-[5px] ${l.sel ? 'bg-[#308cc6] text-white' : ''}`}>
    <div className="flex w-[23px] shrink-0 pl-[6px]">{l.raster && <Expander open />}</div>
    <div className="w-5 shrink-0">{!l.v && <Check on={!!l.on} />}</div>
    {l.raster ? <Icon n="raster" c="size-4" /> : <div className={`size-4 shrink-0 ${l.c}`} />}
    <span className={`ml-[6px] grow whitespace-nowrap ${textStyle(l)}`}>{l.t}</span>
    <div className="flex gap-px">
      {l.badges?.map((b) => <div key={b} className="flex size-[18px] items-center justify-center bg-[#ececec]"><Icon n={b} c="size-[14px]" /></div>)}
    </div>
  </div>
);

/* ---------- map ---------- */
type P = [number, number];
const pts = (s: string, dx = 0, dy = 0): P[] => s.trim().split(/\s+/).map((q) => { const [a, b] = q.split(','); return [+a + dx, +b + dy]; });
const east = (s: string) => pts(s, 840, -150);
/* midpoint displacement, seeded so every render gives the same coast */
const rough = (p: P[], amp: number, seed = 7, cap = 5) => {
  let s = seed * 7919;
  const rnd = () => { s = (s * 16807) % 2147483647; return s / 2147483647 - 0.5; };
  let cur = p;
  for (let k = 0; k < 3; k++) {
    const next: P[] = [];
    cur.forEach((a, i) => {
      const b = cur[(i + 1) % cur.length];
      const d = Math.hypot(b[0] - a[0], b[1] - a[1]);
      next.push(a);
      if (d > 6) {
        const m = (rnd() * Math.min(d * amp, cap)) / d;
        next.push([(a[0] + b[0]) / 2 - (b[1] - a[1]) * m, (a[1] + b[1]) / 2 + (b[0] - a[0]) * m]);
      }
    });
    cur = next;
  }
  return 'M' + cur.map((q) => `${q[0].toFixed(1)} ${q[1].toFixed(1)}`).join('L') + 'Z';
};
const COAST: P[] = [
  ...pts('43,282 57,275 68,272 72,278 80,260 97,252 108,258 132,247 148,242 147,220 160,214 188,215 210,202 230,201 240,188 250,192 275,183 310,180 345,184 365,180 380,168 398,161 420,170 445,180 480,174 510,168 518,174 527,121 560,109 600,95 680,81 757,64 775,102 803,126 831,149 865,137'),
  ...east('60,270 80,255 90,235 105,230 120,226 150,212 165,211 190,195 215,187 245,186 280,186 320,183 345,180 360,190 385,205 388,200 415,199 425,208 440,240 465,270 490,285 500,300 505,325 515,350 530,365 550,370 565,352 585,365 555,400 567,427 600,414 640,420 655,440 680,448 680,473 660,475 665,500 657,520 660,540 636,550 660,565 690,545 705,540 700,560 680,575 680,595 640,610 615,630 612,650 608,660 590,655 530,653 510,668 490,685 440,683 415,690 388,705 385,722 340,722 290,713 250,709 220,708 150,712 80,722 60,727'),
  ...pts('850,586 805,605 798,620 795,610 750,615 728,625 708,645 680,648 650,652 640,662 620,680 608,710 590,712 572,706 568,680 545,662 500,653 420,650 338,656 340,629 400,615 470,603 490,593 498,583 475,573 455,555 445,545 420,538 405,538 372,530 365,510 350,492 335,482 318,475 300,480 290,500 285,490 270,488 255,465 240,448 222,452 220,435 205,420 190,410 165,390 130,365 95,350 75,335 62,325 45,318 52,300'),
];
const ISLANDS: P[][] = [
  east('440,210 460,178 485,162 520,158 525,143 545,145 575,170 615,170 617,150 650,135 655,125 660,137 690,128 697,145 670,170 645,188 650,230 675,240 655,260 650,245 630,265 618,235 600,230 575,225 540,232 515,250 500,265 470,250 445,225'),
  east('495,278 522,273 545,290 540,302 530,288 518,298 522,318 550,333 570,330 552,342 560,358 540,368 515,350 505,320'),
  east('800,70 808,58 820,65 812,78 815,95 822,98 812,108 798,105 806,92 806,78'),
  east('778,75 788,70 790,78 782,82'), east('760,50 770,50 768,55'), east('685,117 690,110 696,116 706,117 695,123'),
  east('675,216 684,213 682,221'), east('655,238 668,240 662,262 655,258'), east('645,425 655,418 668,425 652,430'),
  east('645,392 656,392 650,396'), east('705,595 712,592 706,603'), east('704,838 718,850 710,852'), east('588,870 592,857 605,858 606,868 596,872'),
  east('568,784 590,775 606,755 600,750 603,768 585,782'), east('572,750 584,750 582,754'), east('336,778 348,775 344,780'), east('351,764 358,762 356,768'),
  east('405,757 411,756 409,761'), east('710,522 715,521 713,524'), east('567,402 574,404 569,411'), pts('694,692 701,678 708,691'), pts('705,660 709,659 708,663'),
  pts('580,730 590,727 586,734'), pts('248,488 258,487 255,491'), pts('555,710 568,708 562,712'), pts('354,519 358,520 357,523'), pts('64,335 70,338 67,343'), pts('795,610 802,618 797,622'),
];
const HOLES: P[][] = [
  [
    ...pts('752,300 760,285 775,290 778,278 800,276 830,268 850,272 848,285 870,283'),
    ...east('45,435 60,440 50,458 15,478 35,487 12,512 45,510 50,518 75,500 100,492 95,505 70,520 88,530 68,548 105,556 85,575 55,592 28,605 60,615 35,628 25,610 0,605'),
    ...pts('795,462 805,440 800,425 775,420 765,408 755,403 748,425 728,425 722,440 700,455 695,480 690,510 680,540 665,538 668,520 682,500 668,470 665,430 655,395 625,415 600,440 590,475 582,470 597,440 585,428 605,425 635,400 620,378 640,362 668,360 672,375 690,378 700,360 715,350 720,330 750,308'),
  ],
  pts('663,268 680,268 700,262 715,252 722,280 700,290 690,282 675,280'),
  pts('720,288 740,285 752,297 735,308 722,303'),
  pts('670,553 665,590 640,620 615,640 620,608 603,605 625,600 640,570'),
  pts('660,610 690,612 705,600 728,610 712,618 702,640 690,638 695,620'),
  pts('608,665 630,664 605,680 600,704 585,702 590,680'),
  pts('845,500 860,490 868,492 852,503'), pts('438,370 450,358 468,360 455,368'),
  east('265,430 310,428 310,455 345,460 355,475 380,480 420,478 430,510 465,522 440,545 443,565 470,548 490,535 510,538 545,505 560,520 562,540 602,547 575,570 545,572 500,588 480,595 490,620 475,645 440,660 415,652 405,680 385,695 370,690 378,650 375,632 350,628 315,638 303,610 320,600 305,570 310,545 318,520 325,500 355,492 325,486 290,490 310,480 268,478 298,466 268,455'),
  east('475,668 490,652 505,658 485,675'), east('586,608 594,600 602,608 594,615'), east('118,436 135,442 155,434 135,437'), east('176,410 184,412 188,430 180,430'), east('65,432 85,430 100,412 88,438'),
];
const SPECKS: P[] = [
  ...pts('740,186 825,256 782,485 705,495 892,275 885,330 620,118 460,390 687,380'),
  ...east('302,341 268,403 248,453 470,457 125,561 256,604 320,664 578,521 598,590 508,614 632,587 660,578 671,563 693,559 154,417 141,420 54,425 115,487 598,631 60,478 357,680'),
];
const REDS: P[] = east('736,126 738,139 813,127 815,163 827,157 770,180 778,177 797,177 772,200 784,193 803,188 668,102 710,154 698,163 666,184 692,183 651,277 457,244 465,240 599,402 626,741 317,775 330,796 685,468 708,601 673,103 789,107');
const Dot = ({ p, c, r }: { p: P; c: string; r: number }) => <rect x={p[0] - r} y={p[1] - r * 0.7} width={r * 2} height={r * 1.5} fill={c} />;

const MapCanvas = () => (
  <svg width="1137" height="664" viewBox="461.5 138 1137 664">
    <g transform="translate(730 340) scale(.33333)" strokeWidth="3.200" strokeLinejoin="round">
      <path d={rough(COAST, 0.25, 7, 4.5)} fill="#8d5a99" stroke="#ee2b2f" />
      {ISLANDS.map((p, i) => <path key={i} d={rough(p, 0.35, 11 + i)} fill="#8d5a99" stroke="#dc3a4c" />)}
      {HOLES.map((p, i) => <path key={i} d={rough(p, 0.75, 31 + i, 11)} fill="#fff" stroke="#2c2c2c" />)}
      <path d="M529 140L530 121L567 108L558 121L546 134ZM600 96L632 90L756 65L774 102L774 108L762 106L752 110L748 100L705 106L670 108L638 109L628 104Z" fill="#fff" stroke="none" />
      <path d="M528 142L546 136L558 122L568 109M598 98L618 97L630 95L628 104L638 109L655 106L670 112L682 107L695 109L705 106L720 103L735 104L748 100L752 110L762 106L782 110" fill="none" stroke="#2c2c2c" />
      <path d="M518 172L527 121L560 109L600 95L680 81L757 64L775 102L803 126L831 149" fill="none" stroke="#ee2b2f" />
      <g fill="none" stroke="#2c2c2c" strokeWidth="4.500">
        <path d="M690 158L702 154L712 157L725 147L737 144M722 258L736 250L747 245M702 246L712 256M470 365L485 358L500 356M455 391L464 389" />
        <path d="M1155 186L1165 184M1160 192L1166 187M1132 207L1147 208M1436 368L1450 354L1465 349" />
      </g>
      <g fill="none" stroke="#ff1c1c" strokeWidth="4.500">
        <path d="M498 583L505 597L528 612L545 625L547 638L572 655L582 670L576 682M470 602L483 605L490 624L512 629L540 640M490 596L498 604M508 600L515 612L540 620L540 632L518 626" />
      </g>
      <path d="M549 642L564 650L578 664L575 674" fill="none" stroke="#fff" strokeWidth="3" />
      {SPECKS.map((p, i) => <Dot key={i} p={p} c="#2c2c2c" r={i % 3 ? 3 : 4.5} />)}
      {REDS.map((p, i) => <Dot key={i} p={p} c="#e03545" r={i % 3 ? 2.6 : 4} />)}
      {east('386,496 398,496 434,577 360,608 366,600 376,602 376,614 390,615 396,612 388,624 396,624 392,619 406,598 411,596 418,588 409,626 421,631 358,620 374,630 320,589 571,548 493,543').map((p, i) => <Dot key={i} p={p} c="#d01c8b" r={2} />)}
      <circle cx="1437" cy="711" r="4" fill="#223" />
    </g>
  </svg>
);

/* ---------- status bar ---------- */
const field = 'flex items-center rounded-[3px] border border-[#b0b0b0] bg-white';
const Spin = () => (
  <div className="flex h-full w-[15px] flex-col items-center justify-center gap-[5px] border-l border-[#b8b8b8] bg-[#f7f7f7]">
    <svg width="7" height="4"><path d="M0 4h7L3.500 0z" fill="#555" /></svg>
    <svg width="7" height="4"><path d="M0 0h7L3.500 4z" fill="#555" /></svg>
  </div>
);
const StatusBar = () => (
  <div className="flex h-[31px] shrink-0 items-center overflow-hidden pb-px pl-1 text-[12.5px] whitespace-nowrap">
    <div className={`${field} h-[25px] w-[360px] gap-[8px] pl-2 text-[14.5px] text-[#b4b4b4] italic`}>
      <Icon n="search" c="size-[13px]" /><span className="tracking-[0.15px]">Escreva para localizar (Ctrl+K)</span>
    </div>
    <div className="ml-[177px] h-4 w-[150px] rounded-[2px] border border-[#1f6ca1] bg-[repeating-linear-gradient(125deg,#3aa3e6_0_12px,#369cdf_12px_24px)]" />
    <span className="ml-[14px] w-[70px] tracking-[-0.35px]">Coordenada</span>
    <div className={`${field} h-[23px] w-[110px] justify-center tracking-[-0.3px]`}>662429,7461744</div>
    <Icon n="mouse" c="ml-1 size-4" />
    <span className="ml-[13px] w-[37px] tracking-[-0.4px]">Escala</span>
    <div className={`${field} h-[25px] w-[97px] pl-[3px]`}>
      <span className="grow tracking-[-0.3px]">1:499655</span>
      <div className="flex h-full w-[21px] items-center justify-center border-l border-[#b8b8b8] bg-[#f7f7f7]"><svg width="8" height="5"><path d="M0 0h8L4 4.500z" fill="#555" /></svg></div>
    </div>
    <Icon n="lock" c="ml-[11px] size-[14px]" />
    <span className="ml-[8px] w-[30px] tracking-[-0.4px]">Lupa</span>
    <div className={`${field} h-[25px] w-[98px] pl-1`}><span className="grow tracking-[-0.3px]">100%</span><Spin /></div>
    <span className="ml-[9px] w-[54px] tracking-[-0.4px]">Rotação</span>
    <div className={`${field} h-[23px] w-[94px] pl-1`}><span className="grow tracking-[-0.3px]">0.0 °</span><Spin /></div>
    <div className="ml-[6px]"><Check on /></div>
    <span className="ml-[5px] w-[76px] tracking-[-0.3px]">Renderizar</span>
    <Icon n="crs" c="size-[14px]" />
    <span className="ml-[4px] w-[88px] tracking-[-0.5px]">EPSG:31983</span>
    <Icon n="msg" c="size-[16px]" />
  </div>
);

export default function App() {
  return (
    <div className="flex h-[834px] w-[1600px] flex-col overflow-hidden bg-[#efefef] font-['Noto_Sans',sans-serif] text-[14.5px] leading-[19px] text-[#111]">
      <div className="flex h-[20px] shrink-0 gap-[15px] border-b border-[#d0d0d0] pl-[10px] leading-[17px] tracking-[-0.15px] whitespace-nowrap">
        {MENU.map(([a, k, b, w]) => (
          <div key={a + k + b} className={`${w} shrink-0`}>{a}<span className="underline decoration-[1.5px] underline-offset-[2px] [text-decoration-skip-ink:none]">{k}</span>{b}</div>
        ))}
      </div>
      <Toolbar items={ROWS[0]} c="h-[39px]" />
      <Toolbar items={ROWS[1]} c="h-[39px]" />
      <Toolbar items={ROWS[2]} c="h-[38px]" />
      <div className="flex min-h-0 grow">
        <div className="flex w-[454px] shrink-0 flex-col">
          <Title t="Navegador" c="h-5" />
          <div className="flex h-[31px] shrink-0 items-center gap-[10px] pb-[2px] pl-[8px]">
            {['addlayer', 'refresh', 'filter', 'collapse', 'info'].map((n) => <Icon key={n} n={n} c="size-[15px]" />)}
          </div>
          <div className="flex h-[185px] shrink-0 border border-[#b4b4b4] bg-white">
            <div className="grow overflow-hidden">
              {BROWSER.map(([e, ic, t, d]) => (
                <div key={t} className={`flex h-[19px] items-center ${d ? 'pl-[26px]' : 'pl-[6px]'}`}>
                  <div className="flex w-[17px] shrink-0">{e > 0 && <Expander open={e === 1} />}</div>
                  <Icon n={ic} c="size-4" />
                  <span className="ml-[6px] tracking-[-0.12px] whitespace-nowrap">{t}</span>
                </div>
              ))}
            </div>
            <Scroll thumb="h-[59px]" />
          </div>
          <div className="flex h-[6px] shrink-0 justify-center pt-[1.5px] pl-1"><Dots rows={1} cols={6} /></div>
          <Title t="Camadas" c="h-[19px]" />
          <div className="flex h-[31px] shrink-0 items-center gap-[10px] pb-[2px] pl-[8px]">
            {['brush', 'group', 'eye', 'filter', 'eps'].map((n) => <Icon key={n} n={n} c="size-[15px]" />)}
            <div className="-mr-[4px] -ml-[5px]"><Arrow /></div>
            {['expand', 'collapse', 'remove'].map((n) => <Icon key={n} n={n} c="size-[15px]" />)}
          </div>
          <div className="flex min-h-0 grow border border-[#b4b4b4] bg-white">
            <div className="grow overflow-hidden">{LAYERS.map((l, i) => <LayerRow key={i} l={l} />)}</div>
            <Scroll thumb="h-[174px]" />
          </div>
        </div>
        <div className="flex w-[6px] shrink-0 items-center justify-center pl-[3px]"><Dots rows={6} cols={1} /></div>
        <div className="mt-px w-[1139px] grow border border-[#b4b4b4] bg-white"><MapCanvas /></div>
      </div>
      <StatusBar />
    </div>
  );
}
